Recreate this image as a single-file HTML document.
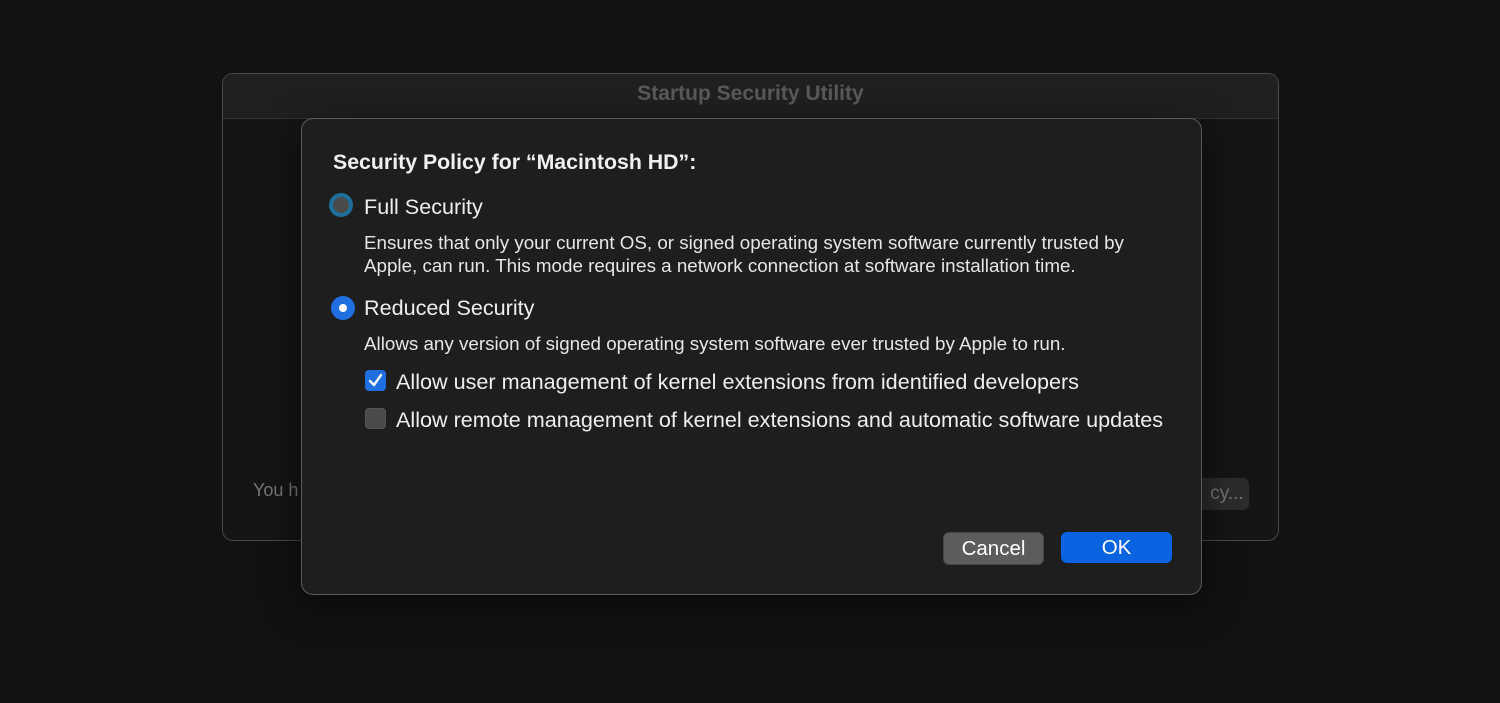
<!DOCTYPE html>
<html><head><style>
body{margin:0;width:1500px;height:703px;background:#121212;font-family:"Liberation Sans",sans-serif;position:relative;overflow:hidden;color:#e8e8e8}
.win{position:absolute;left:222px;top:73px;width:1055px;height:466px;border:1px solid #4a4a4a;border-radius:11px;background:#151515;overflow:hidden}
.tb{height:44px;background:#202020;border-bottom:1px solid #333;text-align:center;line-height:40px;font-weight:bold;font-size:21px;color:#5a5a5a}
.you{position:absolute;left:30px;top:406px;font-size:18px;color:#777}
.pbtn{position:absolute;left:960px;top:404px;width:66px;height:32px;background:#2c2c2c;border-radius:6px;color:#777;font-size:19px;line-height:32px;text-align:right;padding-right:0}
.sheet{position:absolute;left:301px;top:118px;width:899px;height:475px;border:1px solid #5a5a5a;border-radius:12px;background:#1e1e1e;box-shadow:0 10px 40px rgba(0,0,0,.6)}
.t{position:absolute;white-space:nowrap}
.h{left:31px;top:31px;font-size:21.3px;font-weight:bold;color:#f0f0f0}
.o{font-size:21.6px;color:#eee}
.d{font-size:18.8px;color:#e6e6e6;line-height:23px}
.radio{position:absolute;border-radius:50%}
.cb{position:absolute;width:20px;height:20px;border-radius:4px}
.btn{position:absolute;top:413px;height:31px;border-radius:6px;font-size:20.5px;text-align:center;line-height:31px;color:#fff}
</style></head><body>
<div class="win"><div class="tb">Startup Security Utility</div><div class="you">You h</div><div class="pbtn">cy...&nbsp;</div></div>
<div class="sheet">
<div class="t h">Security Policy for “Macintosh HD”:</div>
<div class="radio" style="left:27px;top:74px;width:24px;height:24px;background:#1d6f9a;"></div>
<div class="radio" style="left:31px;top:78px;width:16px;height:16px;background:#4a4a4a;"></div>
<div class="t o" style="left:62px;top:75px">Full Security</div>
<div class="t d" style="left:62px;top:112px">Ensures that only your current OS, or signed operating system software currently trusted by<br>Apple, can run. This mode requires a network connection at software installation time.</div>
<div class="radio" style="left:29px;top:177px;width:24px;height:24px;background:#1f6fe0"></div>
<div class="radio" style="left:37px;top:185px;width:8px;height:8px;background:#fff"></div>
<div class="t o" style="left:62px;top:176px">Reduced Security</div>
<div class="t d" style="left:62px;top:213px">Allows any version of signed operating system software ever trusted by Apple to run.</div>
<div class="cb" style="left:63px;top:251px;background:#1f6fe0;width:21px;height:21px"><svg width="21" height="21"><path d="M5 11l4 4 7-10" stroke="#fff" stroke-width="2.4" fill="none" stroke-linecap="round" stroke-linejoin="round"/></svg></div>
<div class="t o" style="left:94px;top:250px">Allow user management of kernel extensions from identified developers</div>
<div class="cb" style="left:63px;top:289px;background:#4a4a4a;width:21px;height:21px;border:1px solid #555;box-sizing:border-box"></div>
<div class="t o" style="left:94px;top:288px">Allow remote management of kernel extensions and automatic software updates</div>
<div class="btn" style="left:641px;width:99px;background:#5c5c5c;border:1px solid #444">Cancel</div>
<div class="btn" style="left:759px;width:111px;background:#0a63e0">OK</div>
</div>
</body></html>
